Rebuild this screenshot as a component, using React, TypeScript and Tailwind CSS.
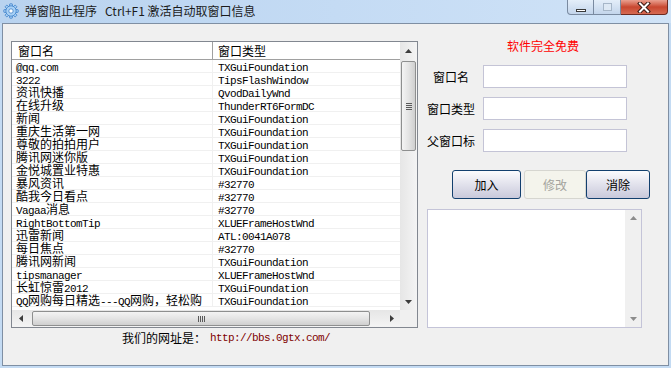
const cjk = "font-['Noto_Sans_CJK_SC',sans-serif]";

const rows: [string, string][] = [
  ["@qq.com", "TXGuiFoundation"],
  ["3222", "TipsFlashWindow"],
  ["资讯快播", "QvodDailyWnd"],
  ["在线升级", "ThunderRT6FormDC"],
  ["新闻", "TXGuiFoundation"],
  ["重庆生活第一网", "TXGuiFoundation"],
  ["尊敬的拍拍用户", "TXGuiFoundation"],
  ["腾讯网迷你版", "TXGuiFoundation"],
  ["金悦城置业特惠", "TXGuiFoundation"],
  ["暴风资讯", "#32770"],
  ["酷我今日看点", "#32770"],
  ["Vagaa消息", "#32770"],
  ["RightBottomTip", "XLUEFrameHostWnd"],
  ["迅雷新闻", "ATL:0041A078"],
  ["每日焦点", "#32770"],
  ["腾讯网新闻", "TXGuiFoundation"],
  ["tipsmanager", "XLUEFrameHostWnd"],
  ["长虹惊雷2012", "TXGuiFoundation"],
  ["QQ网购每日精选---QQ网购，轻松购", "TXGuiFoundation"],
];

// ascii runs get the narrow half-width mono look, the rest stays CJK
function Txt({ s }: { s: string }) {
  const parts = s.match(/[\x20-\x7e]+|[^\x20-\x7e]+/g) ?? [];
  return (
    <span className="inline-block h-[12px] overflow-visible leading-[12px]">
      {parts.map((p, i) =>
        /^[\x20-\x7e]/.test(p) ? (
          <span key={i} className="inline-block h-[12px] font-['Liberation_Mono',monospace] text-[11px] leading-[12px] tracking-[-0.6px]">
            {p}
          </span>
        ) : (
          <span key={i} className="inline-block h-[12px] leading-[12px]">{p}</span>
        )
      )}
    </span>
  );
}

function Tri({ dir, color = "#3c3c3c" }: { dir: "up" | "down" | "left" | "right"; color?: string }) {
  const pts = {
    up: "0,4 7,4 3.5,0",
    down: "0,0 7,0 3.5,4",
    left: "4,0 4,7 0,3.5",
    right: "0,0 0,7 4,3.5",
  }[dir];
  const vertical = dir === "up" || dir === "down";
  return (
    <svg width={vertical ? 7 : 4} height={vertical ? 4 : 7} viewBox={vertical ? "0 0 7 4" : "0 0 4 7"}>
      <polygon points={pts} fill={color} />
    </svg>
  );
}

function Gear() {
  return (
    <svg width="16" height="16" viewBox="0 0 16 16">
      <g fill="#a9d1f5" stroke="#3b7fc9" strokeWidth="0.8">
        {[0, 45, 90, 135].map((a) => (
          <rect key={a} x="6.6" y="0.8" width="2.8" height="14.4" rx="0.6" transform={`rotate(${a} 8 8)`} />
        ))}
        <circle cx="8" cy="8" r="5.2" />
      </g>
      <circle cx="8" cy="8" r="2.2" fill="#fff" stroke="#3b7fc9" strokeWidth="0.8" />
    </svg>
  );
}

function VScroll() {
  return (
    <div className="flex w-[17px] flex-col bg-gradient-to-r from-[#e6e6e6] to-[#f4f4f4]">
      <div className="flex h-[17px] items-center justify-center">
        <Tri dir="up" />
      </div>
      <div className="mx-[1px] mt-[2px] flex h-[90px] items-center justify-center rounded-[2px] border border-[#8e8f8f] bg-gradient-to-r from-[#f4f4f4] via-[#e4e4e4] to-[#cfcfcf]">
        <div className="flex flex-col gap-[1px]">
          <div className="h-[1px] w-[6px] bg-[#5a5a5a]" />
          <div className="h-[1px] w-[6px] bg-[#5a5a5a]" />
          <div className="h-[1px] w-[6px] bg-[#5a5a5a]" />
          <div className="h-[1px] w-[6px] bg-[#5a5a5a]" />
        </div>
      </div>
      <div className="flex-1" />
      <div className="flex h-[17px] items-center justify-center">
        <Tri dir="down" />
      </div>
    </div>
  );
}

function HScroll() {
  return (
    <div className="flex h-[17px] w-[388px] bg-gradient-to-b from-[#e6e6e6] to-[#f4f4f4]">
      <div className="flex w-[17px] items-center justify-center">
        <Tri dir="left" />
      </div>
      <div className="my-[1px] ml-[3px] flex w-[338px] items-center justify-center rounded-[2px] border border-[#8e8f8f] bg-gradient-to-b from-[#f4f4f4] via-[#e4e4e4] to-[#cfcfcf]">
        <div className="flex gap-[1px]">
          <div className="h-[6px] w-[1px] bg-[#5a5a5a]" />
          <div className="h-[6px] w-[1px] bg-[#5a5a5a]" />
          <div className="h-[6px] w-[1px] bg-[#5a5a5a]" />
          <div className="h-[6px] w-[1px] bg-[#5a5a5a]" />
        </div>
      </div>
      <div className="flex-1" />
      <div className="flex w-[17px] items-center justify-center">
        <Tri dir="right" />
      </div>
    </div>
  );
}

function Field({ label }: { label: string }) {
  return (
    <div className="flex items-center">
      <span className="w-[48px] text-center text-[12px] leading-[14px] text-black">{label}</span>
      <div className="ml-[8px] h-[23px] w-[144px] border border-[#c4c4d6] bg-white" />
    </div>
  );
}

export default function App() {
  return (
    <div className={`flex h-[368px] w-[671px] flex-col overflow-hidden bg-[#c4dbf3] ${cjk}`}>
      {/* title bar */}
      <div className="flex h-[23px] items-start bg-gradient-to-r from-[#b9d3ef] via-[#c4dbf4] to-[#d0e3f7]">
        <div className="flex h-[22px] items-center pl-[3px]">
          <Gear />
          <span className="ml-[6px] whitespace-pre text-[12px] leading-[14px] text-[#1b1b1b]">
            弹窗阻止程序   Ctrl+F1 激活自动取窗口信息
          </span>
        </div>
        <div className="ml-auto mr-[3px] flex">
          <div className="flex h-[15px] w-[27px] items-end justify-center rounded-bl-[4px] border border-t-0 border-[#7a8aa0] bg-gradient-to-b from-[#e4eef9] to-[#c3d5eb] pb-[2px]">
            <div className="h-[3px] w-[10px] border border-[#3a3a3a] bg-white" />
          </div>
          <div className="flex h-[15px] w-[27px] items-center justify-center border border-l-0 border-t-0 border-[#7a8aa0] bg-gradient-to-b from-[#e4eef9] to-[#c3d5eb]">
            <div className="h-[8px] w-[9px] border border-[#a6b6c8] bg-[#dde8f4]" />
          </div>
          <div className="flex h-[15px] w-[47px] items-center justify-center rounded-br-[4px] border border-l-0 border-t-0 border-[#6e2a20] bg-gradient-to-b from-[#e9a090] via-[#c8462f] to-[#d66a52]">
            <svg width="14" height="11" viewBox="0 0 14 11">
              <path d="M3 1.5 L11 9.5 M11 1.5 L3 9.5" stroke="#3b1a14" strokeWidth="4" strokeLinecap="square" />
              <path d="M3 1.5 L11 9.5 M11 1.5 L3 9.5" stroke="#fff" strokeWidth="2" strokeLinecap="square" />
            </svg>
          </div>
        </div>
      </div>

      {/* client area */}
      <div className="ml-[2px] flex h-[343px] w-[667px] flex-col border border-[#7f8fa3] bg-[#f0f0f0]">
        <div className="flex items-start">
          {/* list view */}
          <div className="ml-[8px] mt-[17px] flex h-[287px] w-[407px] flex-col border border-[#828790] bg-white">
            <div className="flex h-[268px]">
              <div className="flex w-[388px] flex-col overflow-hidden">
                <div className="flex h-[18px] shrink-0 border-b border-[#a0a0a0] text-[12px] leading-[14px] text-black">
                  <div className="flex w-[201px] items-center border-r border-[#a0a0a0] pl-[6px]">窗口名</div>
                  <div className="flex flex-1 items-center pl-[5px]">窗口类型</div>
                </div>
                {rows.map(([name, cls]) => (
                  <div key={name} className="flex h-[13px] shrink-0 border-b border-[#f0f0f0] text-[12px] leading-[12px] text-black">
                    <div className="flex w-[201px] items-center whitespace-pre border-r border-[#f0f0f0] pl-[4px]">
                      <Txt s={name} />
                    </div>
                    <div className="flex flex-1 items-center pl-[5px]">
                      <Txt s={cls} />
                    </div>
                  </div>
                ))}
              </div>
              <VScroll />
            </div>
            <div className="flex">
              <HScroll />
              <div className="h-[17px] w-[17px] bg-[#f0f0f0]" />
            </div>
          </div>

          {/* right panel */}
          <div className="ml-[9px] flex flex-col pt-[15px]">
            <span className="ml-[80px] text-[12px] leading-[14px] text-[#ff0000]">软件完全免费</span>
            <div className="mt-[12px] flex flex-col gap-[9px]">
              <Field label="窗口名" />
              <Field label="窗口类型" />
              <Field label="父窗口标" />
            </div>
            <div className="ml-[25px] mt-[18px] flex text-[12px] leading-[14px]">
              <div className="flex h-[29px] w-[69px] items-center justify-center rounded-[3px] border border-[#123f6e] bg-gradient-to-b from-[#fbfbfd] to-[#c9c9db] text-black">
                加入
              </div>
              <div className="ml-[3px] flex h-[29px] w-[62px] items-center justify-center rounded-[3px] border border-[#d6d6d0] bg-[#f4f4ec] text-[#a4a49e]">
                修改
              </div>
              <div className="flex h-[29px] w-[64px] items-center justify-center rounded-[3px] border border-[#123f6e] bg-gradient-to-b from-[#fbfbfd] to-[#c9c9db] text-black">
                消除
              </div>
            </div>
            <div className="mt-[10px] flex h-[119px] w-[215px] border border-[#c4c4d8] bg-white">
              <div className="flex-1" />
              <div className="flex w-[16px] flex-col items-center justify-between bg-[#f0f0f0] py-[6px]">
                <Tri dir="up" color="#8c8c8c" />
                <Tri dir="down" color="#8c8c8c" />
              </div>
            </div>
          </div>
        </div>

        <div className="ml-[119px] mt-[3px] flex items-center text-[12px] leading-[14px] text-black">
          <span>我们的网址是：</span>
          <span className="ml-[4px] font-['Liberation_Mono',monospace] text-[11px] tracking-[-0.6px] text-[#800000]">
            http://bbs.0gtx.com/
          </span>
        </div>
      </div>
    </div>
  );
}
